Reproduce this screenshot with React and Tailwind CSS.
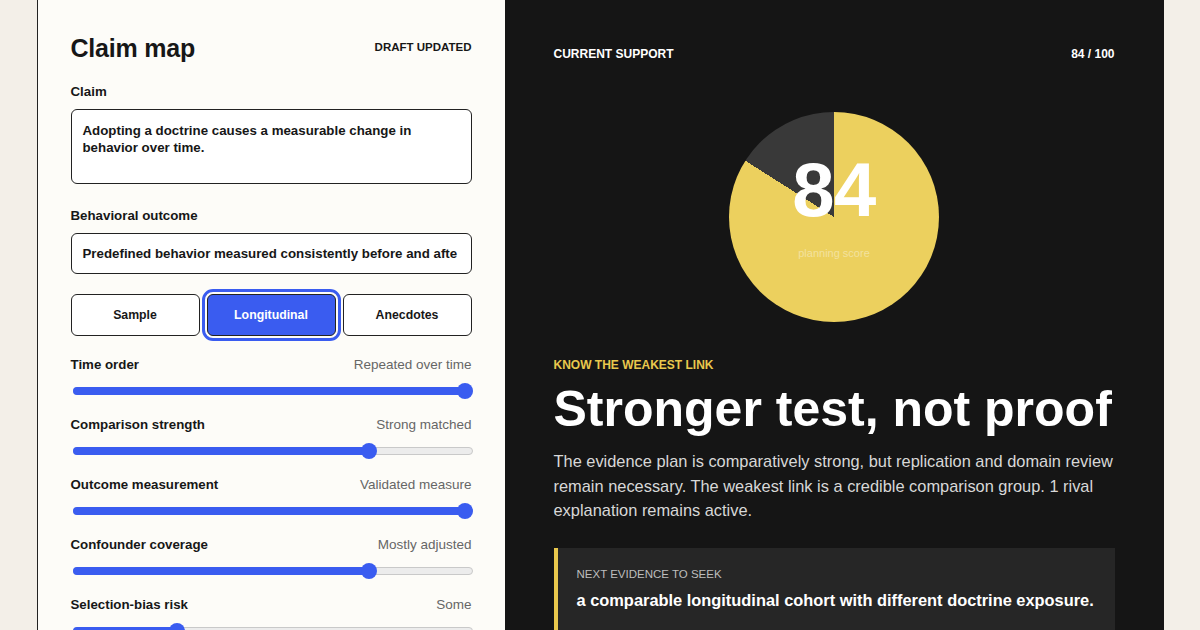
import React from 'react';

const sliders = [
  { label: 'Time order', value: 'Repeated over time', f: 1 },
  { label: 'Comparison strength', value: 'Strong matched', f: 0.75 },
  { label: 'Outcome measurement', value: 'Validated measure', f: 1 },
  { label: 'Confounder coverage', value: 'Mostly adjusted', f: 0.75 },
  { label: 'Selection-bias risk', value: 'Some', f: 0.25 },
];

const Slider = ({ f }) => {
  const center = 8 + f * 384;
  return (
    <div className="relative ml-[2px] h-[20px] w-[400px]">
      <div className="absolute left-0 right-0 top-[6px] h-[8px] rounded-full border border-[#c9c9c9] bg-[#ececec]" />
      <div
        className="absolute left-0 top-[6px] h-[8px] rounded-full bg-[#3a5cf0]"
        style={{ width: center + 4 }}
      />
      <div
        className="absolute top-[2px] h-[16px] w-[16px] rounded-full bg-[#3a5cf0]"
        style={{ left: center - 8 }}
      />
    </div>
  );
};

const Pie = () => (
  <div className="relative mx-auto h-[210px] w-[210px]">
    <div className="h-full w-full rounded-full bg-[conic-gradient(#ecd05e_0%_84%,#393939_84%_100%)]" />
    <div className="absolute inset-0 flex flex-col items-center justify-center">
      <div className="mt-[-20px] text-[76px] font-bold leading-none tracking-[-0.5px] text-white">84</div>
      <div className="mt-[17px] text-[11px] text-white/40">planning score</div>
    </div>
  </div>
);

export default function App() {
  return (
    <div
      className="h-[630px] overflow-hidden bg-[#f3efe8] text-[#171717]"
      style={{ fontFamily: '"Liberation Sans", Arial, sans-serif' }}
    >
      <div className="mx-auto flex h-full w-[1127px]">
        <div className="w-[468px] shrink-0 border-l border-[#222] bg-[#fdfcf8] px-[33px] pt-[33px]">
          <div className="flex items-center justify-between">
            <h1 className="text-[25px] font-bold leading-[30px] tracking-[-0.2px]">Claim map</h1>
            <span className="text-[11.5px] font-bold">DRAFT UPDATED</span>
          </div>

          <div className="mt-[21px] text-[13.3px] font-bold leading-[16px]">Claim</div>
          <div className="mt-[9px] h-[75px] rounded-[6px] border border-[#222] bg-white px-[11px] pt-[12px] text-[13.3px] font-bold leading-[17px]">
            Adopting a doctrine causes a measurable change in behavior over time.
          </div>

          <div className="mt-[24px] text-[13.3px] font-bold leading-[16px]">Behavioral outcome</div>
          <div className="mt-[9px] flex h-[41px] items-center whitespace-nowrap rounded-[6px] border border-[#222] bg-white px-[11px] text-[13.3px] font-bold">
            Predefined behavior measured consistently before and afte
          </div>

          <div className="mt-[20px] flex gap-[7px]">
            <div className="flex h-[42px] flex-1 items-center justify-center rounded-[6px] border border-[#222] bg-white text-[12.3px] font-bold">
              Sample
            </div>
            <div className="flex h-[42px] flex-1 items-center justify-center rounded-[6px] border border-[#222] bg-[#3a5cf0] text-[12.3px] font-bold text-white outline-3 outline-offset-2 outline-[#3a5cf0]">
              Longitudinal
            </div>
            <div className="flex h-[42px] flex-1 items-center justify-center rounded-[6px] border border-[#222] bg-white text-[12.3px] font-bold">
              Anecdotes
            </div>
          </div>

          <div className="mt-[21px] flex flex-col gap-[16px]">
            {sliders.map((s) => (
              <div key={s.label}>
                <div className="flex justify-between text-[13.5px] leading-[16px]">
                  <span className="text-[13.3px] font-bold">{s.label}</span>
                  <span className="text-[#666]">{s.value}</span>
                </div>
                <div className="mt-[8px]">
                  <Slider f={s.f} />
                </div>
              </div>
            ))}
          </div>
        </div>

        <div className="w-[659px] shrink-0 bg-[#151515] px-[49px] pt-[46px] text-white">
          <div className="flex justify-between text-[12px] font-bold leading-[16px]">
            <span>CURRENT SUPPORT</span>
            <span>84 / 100</span>
          </div>

          <div className="mt-[50px]">
            <Pie />
          </div>

          <div className="mt-[35px] text-[12px] font-bold leading-[16px] text-[#e9c84d]">KNOW THE WEAKEST LINK</div>
          <h2 className="mt-[11px] text-[50px] font-bold leading-[50px]">Stronger test, not proof</h2>
          <p className="mt-[15px] text-[16.4px] leading-[24.5px] text-[#d8d8d8]">
            The evidence plan is comparatively strong, but replication and domain review remain necessary. The weakest link is a credible comparison group. 1 rival explanation remains active.
          </p>

          <div className="mt-[25px] h-[100px] border-l-4 border-[#e9c84d] bg-[#262626] pl-[19px] pt-[18px]">
            <div className="text-[11.5px] leading-[16px] text-[#bdbdbd]">NEXT EVIDENCE TO SEEK</div>
            <div className="mt-[8px] text-[16.4px] font-bold leading-[20px]">
              a comparable longitudinal cohort with different doctrine exposure.
            </div>
          </div>
        </div>
      </div>
    </div>
  );
}
